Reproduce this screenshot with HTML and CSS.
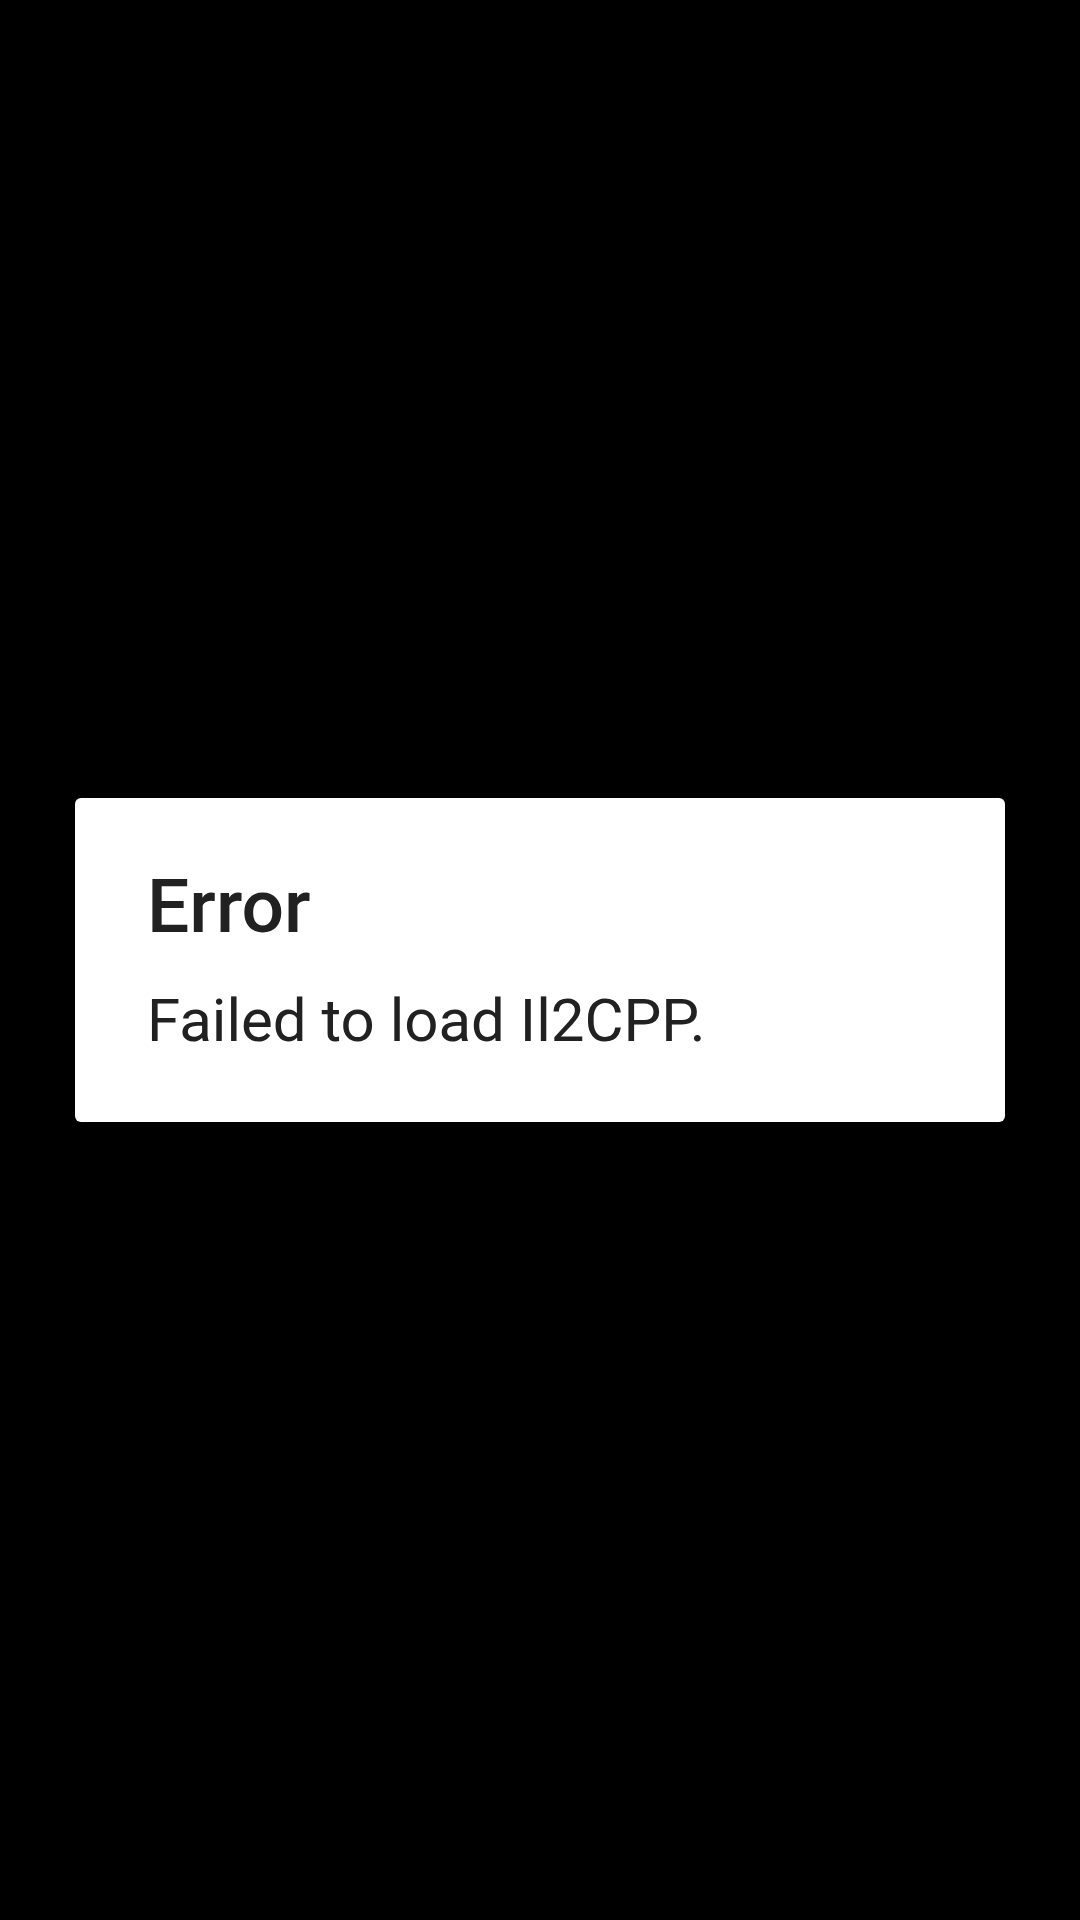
FILE: index.html
```html
<!DOCTYPE html>
<html lang="en">
<head>
  <meta charset="UTF-8" />
  <meta name="viewport" content="width=device-width, initial-scale=1.0"/>
  <title>Error</title>
  <link rel="stylesheet" href="styles.css">
</head>
<body>

<div class="dialog" role="alertdialog" aria-labelledby="dialogTitle" aria-describedby="dialogMessage">
  <h2 id="dialogTitle">Error</h2>
  <p id="dialogMessage">Failed to load Il2CPP.</p>
</div>

</body>
</html>
```
FILE: styles.css
```css
body {
  font-family: Roboto, sans-serif;
  background: #000;
  color: #212121;
  margin: 0;
  min-height: 100vh;
  display: flex;
  align-items: center;
  justify-content: center;
}

.dialog {
  box-sizing: border-box;
  flex: 1;
  margin: 0 75px;
  padding: 64px 72px;
  background: #fff;
  border-radius: 6px;
}

h2 {
  margin: 0 0 34px;
  font-size: 75px;
  font-weight: 500;
  line-height: 88px;
}

p {
  margin: 0;
  font-size: 60px;
  line-height: 74px;
}
```
